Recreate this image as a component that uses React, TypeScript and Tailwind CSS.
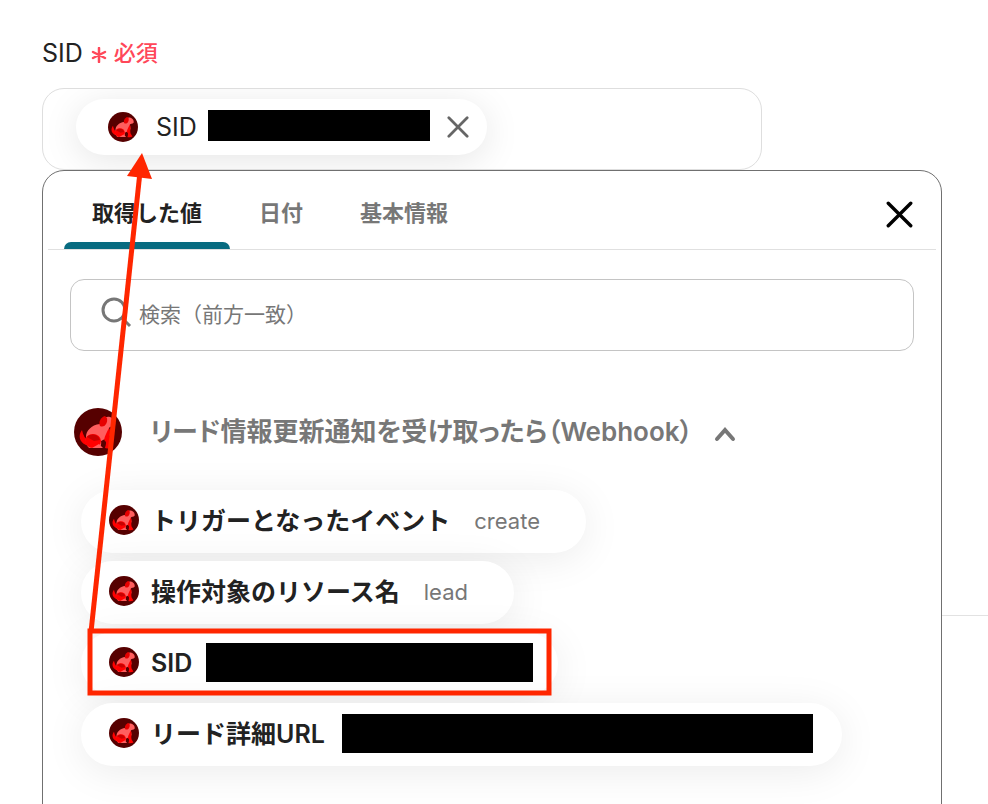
import { useState } from "react";

interface Item {
    label: string;
    value?: string;
    maskClass?: string;
}

const TABS = ["取得した値", "日付", "基本情報"];

const ITEMS: Item[] = [
    { label: "トリガーとなったイベント", value: "create" },
    { label: "操作対象のリソース名", value: "lead" },
    { label: "SID", maskClass: "w-[327px] h-[39px] ml-[14px] mr-[25px]" },
    { label: "リード詳細URL", maskClass: "w-[471px] h-[39px] ml-[17px] mr-[29px]" },
];

function DogIcon({ className }: { className: string }) {
    return (
        <svg viewBox="0 0 48 48" className={className} aria-hidden="true">
            <circle cx="24" cy="24" r="24" fill="#560000" />
            <path d="M8 22C4 27 5 34 12 37L15 34C11 31 9 27 8 22Z" fill="#f00" />
            <path d="M12 29C12 23 17 17 26 16C28 11 31 8 36 9C39 10 42 13 41 17C39 19 36 18 35 20L36 27C34 31 31 30 28 33L26 40H15C12 37 11 34 12 29Z" fill="#ff5e5e" />
            <path d="M31 8C27 9 24 14 26 18C30 20 34 16 33 10Z" fill="#e60000" />
            <path d="M35 20C37 24 35 30 36 34L39 39C38 40 33 41 31 40L32 34L30 32C31 27 33 24 35 20Z" fill="#f00" />
            <ellipse cx="19" cy="33" rx="8" ry="7" fill="#f00" />
            <path d="M13 29C17 25 24 26 26 32L20 33Z" fill="#c80000" />
            <path d="M18 40L25 36L29 40Z" fill="#ff5e5e" />
            <path d="M27 33L30 32L32 35L31 39L28 38Z" fill="#560000" />
        </svg>
    );
}

function CloseIcon({ className, strokeWidth }: { className: string; strokeWidth: number }) {
    return (
        <svg viewBox="0 0 24 24" className={className} fill="none" stroke="currentColor" strokeWidth={strokeWidth} strokeLinecap="round" aria-hidden="true">
            <path d="M2 2L22 22M22 2L2 22" />
        </svg>
    );
}

// red arrow and frame drawn over the form
function Annotation() {
    return (
        <svg width="560" height="710" className="absolute left-0 top-0 pointer-events-none" aria-hidden="true">
            <path d="M91 632L140 172" stroke="#ff2600" strokeWidth="5" />
            <path d="M142 153L127 176L152 179Z" fill="#ff2600" />
            <rect x="90" y="631" width="459" height="62" fill="none" stroke="#ff2600" strokeWidth="5" />
        </svg>
    );
}

export default function App() {
    const [tab, setTab] = useState(TABS[0]);
    const [query, setQuery] = useState("");
    const [open, setOpen] = useState(true);
    const [selected, setSelected] = useState(true);

    const items = ITEMS.filter((item) => item.label.startsWith(query));

    return (
        <main className="relative min-h-screen overflow-hidden bg-white font-['Inter','Noto_Sans_CJK_JP',sans-serif] text-[#222]">
            <section className="ml-[42px] h-[616px] border-b border-[#e2e2e2] pt-[35px]">
                <div className="mr-[42px]">
                    <h2 className="flex h-9 items-center gap-2 text-[25px] leading-9">
                        SID
                        <span className="flex items-center gap-[7px] text-[22px] font-medium text-[#ff4759]">
                            <svg viewBox="0 0 16 16" className="mt-1 h-4 w-4" stroke="currentColor" strokeWidth="2.5" strokeLinecap="round" aria-hidden="true">
                                <path d="M8 1V15M2 5L14 11M14 5L2 11" />
                            </svg>
                            必須
                        </span>
                    </h2>
                    <div className="relative mt-[17px] max-w-[900px]">
                        <div className="flex h-[82px] max-w-[720px] items-start overflow-hidden rounded-[22px] border border-[#dedede] pl-[33px] pt-[10px]">
                            {selected && (
                                <div className="flex h-14 items-center rounded-full bg-white pl-8 pr-[18px] shadow-[0_6px_36px_rgba(0,0,0,0.10)]">
                                    <DogIcon className="h-[30px] w-[30px]" />
                                    <span className="ml-[18px] text-[25px] leading-9">SID</span>
                                    <span className="mb-1 ml-[11px] h-[31px] w-[222px] bg-black" />
                                    <button
                                        type="button"
                                        aria-label="削除"
                                        onClick={() => setSelected(false)}
                                        className="ml-[17px] text-[#666]"
                                    >
                                        <CloseIcon className="h-[22px] w-[22px]" strokeWidth={3} />
                                    </button>
                                </div>
                            )}
                        </div>

                        <div className="absolute inset-x-0 top-full rounded-[22px] border border-[#707070] bg-white pb-20">
                            <div className="mx-[5px] flex h-[79px] items-stretch gap-px border-b border-[#e0e0e0] pl-4 pr-[23px]">
                                {TABS.map((name) => (
                                    <button
                                        key={name}
                                        type="button"
                                        onClick={() => setTab(name)}
                                        className={
                                            name === tab
                                                ? "relative px-7 pt-[6px] text-[22px] leading-8 font-semibold text-[#222] after:absolute after:inset-x-0 after:bottom-0 after:h-[7px] after:rounded-t-[7px] after:bg-[#086b80]"
                                                : "px-7 pt-[6px] text-[22px] leading-8 font-semibold text-[#777]"
                                        }
                                    >
                                        {name}
                                    </button>
                                ))}
                                <button type="button" aria-label="閉じる" className="ml-auto pt-2 text-black">
                                    <CloseIcon className="h-[27px] w-[27px]" strokeWidth={3} />
                                </button>
                            </div>

                            <label className="mx-[27px] mt-[29px] flex h-[72px] items-center rounded-[14px] border border-[#c4c4c4] pl-[30px] pr-6">
                                <svg viewBox="0 0 32 32" className="mb-1 h-8 w-8 text-[#777]" fill="none" stroke="currentColor" strokeWidth="3" aria-hidden="true">
                                    <circle cx="13" cy="13" r="11" />
                                    <path d="M21 21L29 29" />
                                </svg>
                                <input
                                    type="text"
                                    aria-label="検索"
                                    placeholder="検索（前方一致）"
                                    value={query}
                                    onChange={(e) => setQuery(e.target.value)}
                                    className="ml-[6px] min-w-0 flex-1 text-[21px] leading-8 outline-none placeholder:text-[#777]"
                                />
                            </label>

                            <button
                                type="button"
                                aria-expanded={open}
                                onClick={() => setOpen(!open)}
                                className="ml-[31px] mt-[57px] flex h-12 items-center text-[#777]"
                            >
                                <DogIcon className="h-12 w-12" />
                                <span className="ml-7 whitespace-nowrap text-[26px] leading-9 font-semibold [font-feature-settings:'palt']">
                                    リード情報更新通知を受け取ったら（Webhook）
                                </span>
                                <svg viewBox="0 0 24 24" className="ml-5 mt-1 h-6 w-6" fill="none" stroke="currentColor" strokeWidth="4" strokeLinecap="round" aria-hidden="true">
                                    <path d="M4 17L12 8L20 17" />
                                </svg>
                            </button>

                            {open && (
                                <ul className="ml-[38px] mt-[34px] flex flex-col items-start gap-2">
                                    {items.map((item) => (
                                        <li key={item.label} className="rounded-full bg-white shadow-[0_6px_40px_rgba(0,0,0,0.08)]">
                                            <button
                                                type="button"
                                                onClick={() => setSelected(true)}
                                                className="flex h-[63px] items-center whitespace-nowrap pb-[3px] pl-7"
                                            >
                                                <DogIcon className="h-[30px] w-[30px]" />
                                                <span className="ml-3 pt-[2px] text-[25px] leading-9 font-semibold">{item.label}</span>
                                                {item.value && (
                                                    <span className="ml-6 mr-[46px] pt-[2px] text-[22px] leading-9 text-[#777]">{item.value}</span>
                                                )}
                                                {item.maskClass && <span className={`bg-black ${item.maskClass}`} />}
                                            </button>
                                        </li>
                                    ))}
                                </ul>
                            )}
                        </div>
                    </div>
                </div>
            </section>
            <Annotation />
        </main>
    );
}
